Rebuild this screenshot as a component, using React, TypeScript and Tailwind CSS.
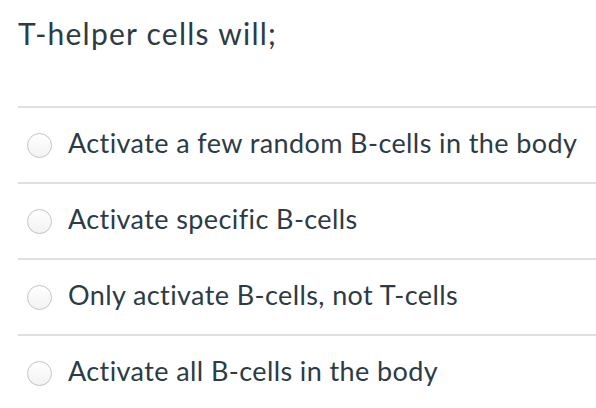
const answers = [
  "Activate a few random B-cells in the body",
  "Activate specific B-cells",
  "Only activate B-cells, not T-cells",
  "Activate all B-cells in the body",
];

function Radio() {
  return (
    <span className="block w-[25px] h-[25px] shrink-0 rounded-full border border-[#c4c4c4] bg-gradient-to-b from-[#ffffff] to-[#f2f2f2] shadow-[inset_0_1px_1px_rgba(255,255,255,0.9)]" />
  );
}

export default function App() {
  return (
    <div
      className="w-[596px] h-[408px] overflow-hidden bg-white pl-[18px] text-[#2d3b45]"
      style={{ fontFamily: "Lato, 'Noto Sans', sans-serif" }}
    >
      <div className="h-[106px] pt-[13px]">
        <h1 className="text-[30px] leading-[40px] tracking-[1.25px] font-normal">T-helper cells will;</h1>
      </div>
      {answers.map((a) => (
        <label
          key={a}
          className="flex items-center h-[76px] border-t-2 border-[#e0e0e0] pl-[9px] gap-[16px]"
        >
          <Radio />
          <span className="text-[27px] leading-[32px] tracking-[0.4px] -mt-[4px]">{a}</span>
        </label>
      ))}
    </div>
  );
}
